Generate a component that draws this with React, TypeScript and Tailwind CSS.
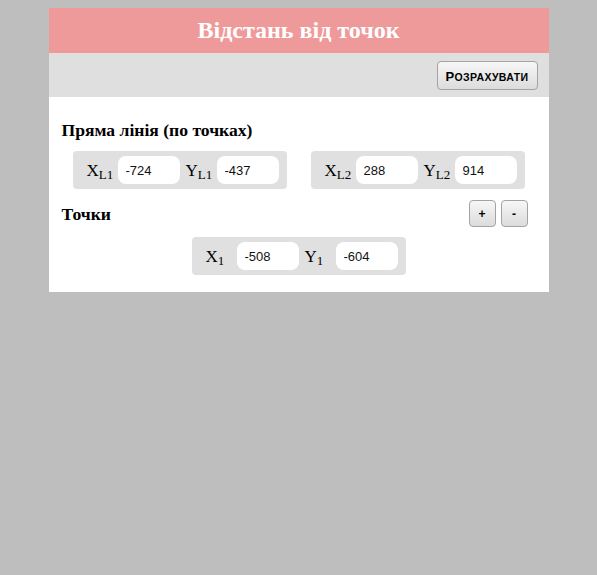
import { useState } from 'react'

type Pair = { label: string; sub: string; value: string }

function Field({ label, sub, value, first }: { label: string; sub: string; value: string; first?: boolean }) {
  const [v, setV] = useState(value)
  return (
    <>
      <span className={`w-[31px] shrink-0 text-[17px] leading-none text-black ${first ? '' : 'ml-[6px]'}`}>
        {label}
        <sub className="text-[13px]">{sub}</sub>
      </span>
      <input
        className="w-[62px] h-[28px] rounded-lg bg-white px-[8px] text-[13px] text-[#111] outline-none font-['Liberation_Sans',Arial,sans-serif]"
        value={v}
        onChange={(e) => setV(e.target.value)}
      />
    </>
  )
}

function Box({ a, b }: { a: Pair; b: Pair }) {
  return (
    <div className="flex w-[214px] items-center rounded bg-[#e0e0e0] pl-[14px] pr-[8px] py-[5px]">
      <Field {...a} first />
      <Field {...b} />
    </div>
  )
}

function SmallBtn({ children }: { children: React.ReactNode }) {
  return (
    <button className="h-[27px] w-[27px] rounded-sm border border-[#a3a3a3] bg-gradient-to-b from-[#f7f7f7] to-[#dcdcdc] text-[12px] font-bold text-black font-['Liberation_Sans',Arial,sans-serif]">
      {children}
    </button>
  )
}

export default function App() {
  return (
    <div className="min-h-[575px] bg-[#bebebe] pt-2 font-['Liberation_Serif','Times_New_Roman',serif]">
      <div className="mx-auto w-[500px]">
        <div className="flex h-[45px] items-center justify-center bg-[#ef9a9a]">
          <h1 className="text-[24px] font-bold leading-[27px] text-white">Відстань від точок</h1>
        </div>
        <div className="flex h-[44px] items-start justify-end bg-[#dfdfdf] pt-2 pr-[11px]">
          <button className="h-[29px] w-[101px] rounded-sm border border-[#a3a3a3] bg-gradient-to-b from-[#f7f7f7] to-[#dcdcdc] font-bold text-black tracking-[0.4px] font-['Liberation_Sans',Arial,sans-serif]">
            <span className="text-[13px]">Р</span>
            <span className="text-[10.5px]">ОЗРАХУВАТИ</span>
          </button>
        </div>
        <div className="bg-white pt-[22px] pb-[17px]">
          <h3 className="pl-[13px] text-[17.6px] font-bold leading-[22px] text-black">Пряма лінія (по точках)</h3>
          <div className="mt-[10px] flex justify-evenly">
            <Box a={{ label: 'X', sub: 'L1', value: '-724' }} b={{ label: 'Y', sub: 'L1', value: '-437' }} />
            <Box a={{ label: 'X', sub: 'L2', value: '288' }} b={{ label: 'Y', sub: 'L2', value: '914' }} />
          </div>
          <div className="mt-[11px] flex items-center justify-between pl-[13px] pr-[21px]">
            <h3 className="text-[17.6px] font-bold leading-[22px] text-black">Точки</h3>
            <div className="flex gap-[5px]">
              <SmallBtn>+</SmallBtn>
              <SmallBtn>-</SmallBtn>
            </div>
          </div>
          <div className="mt-[10px] flex justify-center">
            <Box a={{ label: 'X', sub: '1', value: '-508' }} b={{ label: 'Y', sub: '1', value: '-604' }} />
          </div>
        </div>
      </div>
    </div>
  )
}
